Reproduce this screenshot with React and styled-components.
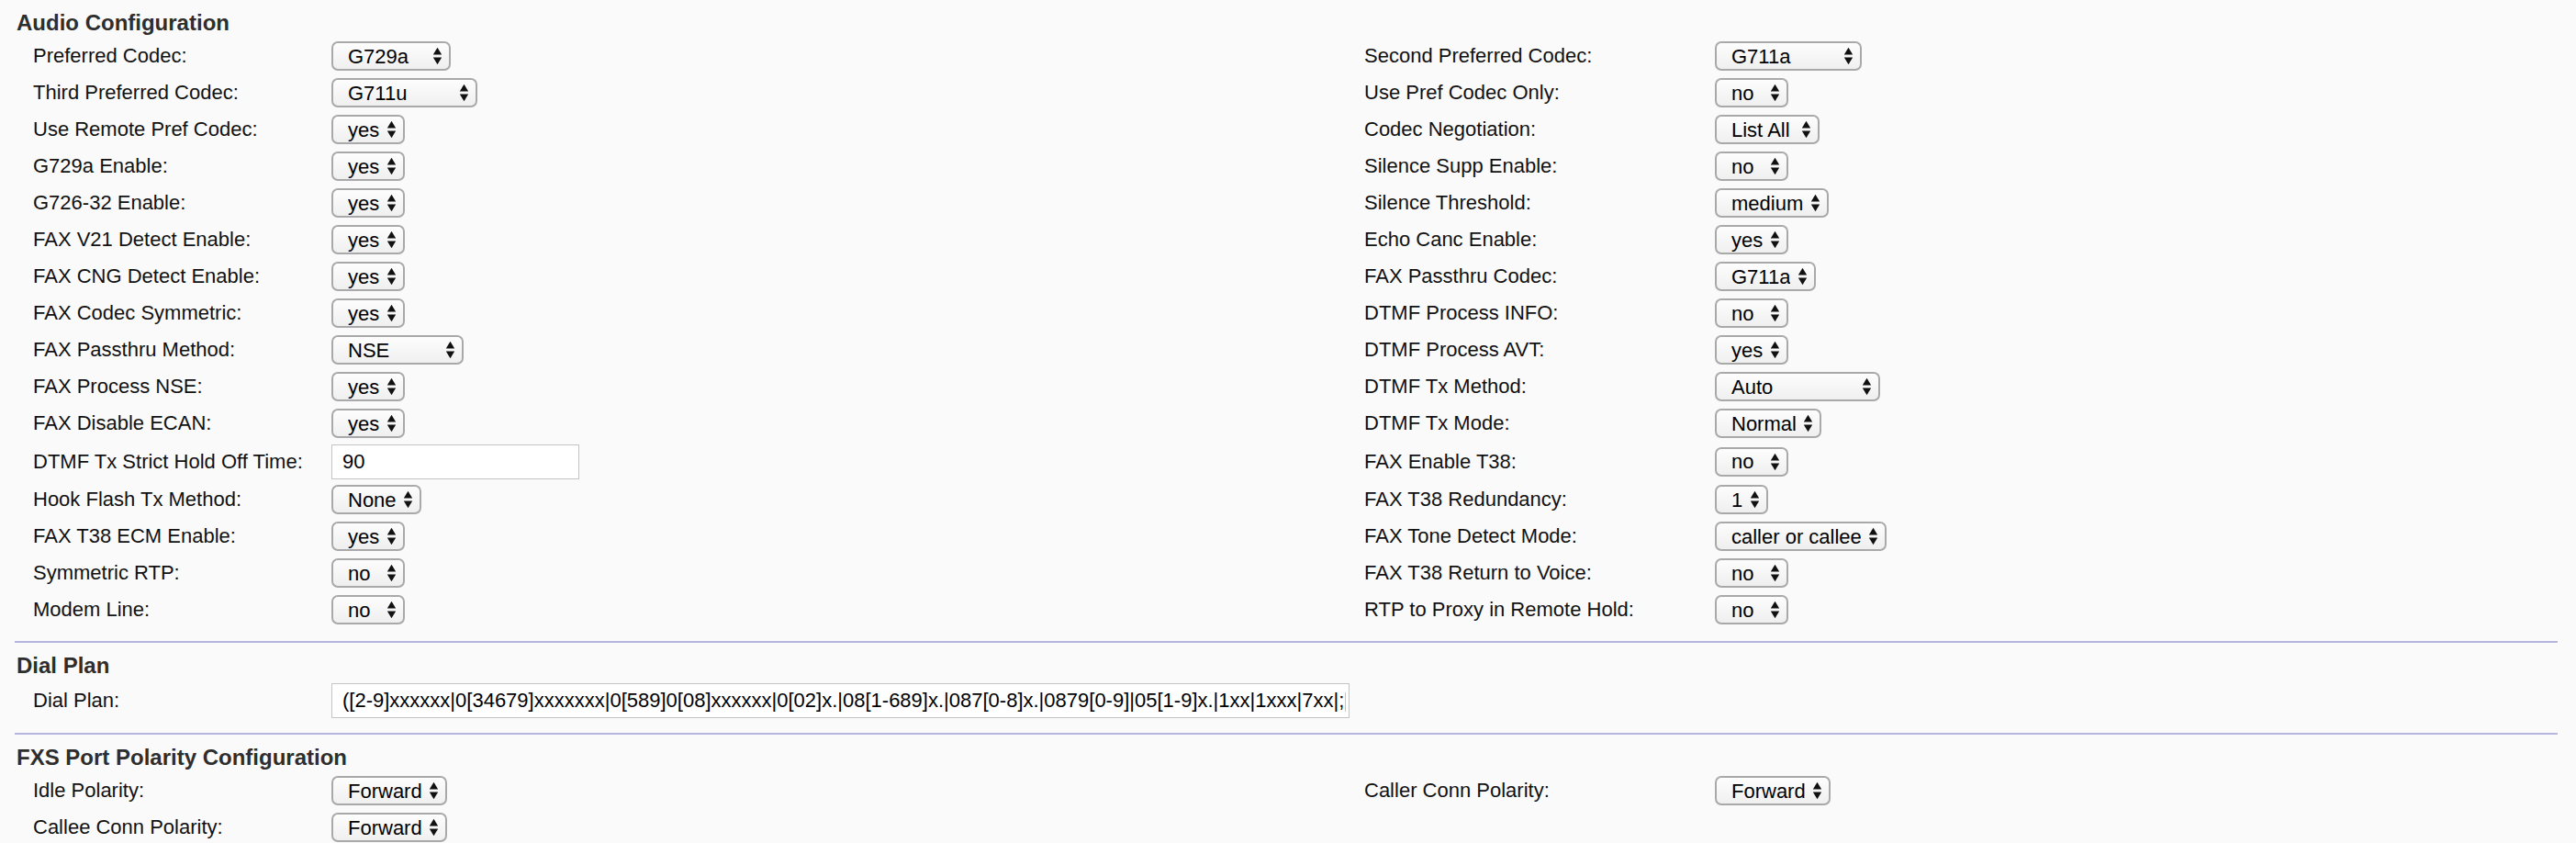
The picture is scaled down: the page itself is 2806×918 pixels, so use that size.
import React from 'react';
import styled, { createGlobalStyle } from 'styled-components';

const GlobalStyle = createGlobalStyle`
  html, body {
    margin: 0;
    padding: 0;
    background: #fafafa;
  }
  body {
    font-family: 'Liberation Sans', Arial, Helvetica, sans-serif;
    color: #000;
  }
`;

const Page = styled.div`
  margin: 0 20px 0 16px;
`;

const Section = styled.section`
  border-top: ${({ $first }) => ($first ? 'none' : '2px solid #b5b5de')};
  padding: 11px 0 14px;
`;

const Heading = styled.h2`
  margin: 0 0 2px 2px;
  font-size: 24px;
  line-height: 28px;
  font-weight: bold;
  color: #2e2e2e;
`;

const FieldGrid = styled.div`
  display: grid;
  grid-template-columns: 325px 1125px 382px 1fr;
  align-items: center;
  padding-left: 20px;
`;

const Label = styled.div`
  font-size: 22px;
  line-height: 26px;
  min-height: 40px;
  display: flex;
  align-items: center;
  white-space: nowrap;
  color: #111;
`;

const Cell = styled.div`
  min-height: 40px;
  display: flex;
  align-items: center;
`;

const SelectBox = styled.div`
  position: relative;
  display: inline-block;
  width: ${({ $w }) => $w}px;
  height: 32px;
`;

const NativeSelect = styled.select`
  appearance: none;
  -webkit-appearance: none;
  box-sizing: border-box;
  width: 100%;
  height: 100%;
  margin: 0;
  padding: 0 26px 0 16px;
  border: 2px solid #a9a9a9;
  border-radius: 7px;
  background: linear-gradient(#fdfdfd, #efefef);
  font-family: 'Liberation Sans', Arial, sans-serif;
  font-size: 22px;
  color: #000;
  outline: none;
`;

const Arrows = styled.svg`
  position: absolute;
  right: 9px;
  top: 50%;
  transform: translateY(-50%);
  pointer-events: none;
`;

const TextInput = styled.input`
  box-sizing: border-box;
  width: ${({ $w }) => $w}px;
  height: 38px;
  margin: 2.5px 0;
  padding: 0 ${({ $tight }) => ($tight ? '3px' : '11px')} 0 11px;
  border: 1px solid #c4c4c4;
  border-radius: 0;
  background: #fff;
  font-family: 'Liberation Sans', Arial, sans-serif;
  font-size: 22px;
  color: #000;
  outline: none;
`;

const Select = ({ value, width, options }) => (
  <SelectBox $w={width}>
    <NativeSelect defaultValue={value}>
      {(options || [value]).map((o) => (
        <option key={o} value={o}>
          {o}
        </option>
      ))}
    </NativeSelect>
    <Arrows width="11" height="19" viewBox="0 0 11 19">
      <polygon points="0.8,8 5.5,0.3 10.2,8" fill="#111" />
      <polygon points="0.8,11 10.2,11 5.5,18.7" fill="#111" />
    </Arrows>
  </SelectBox>
);

const yn = ['yes', 'no'];
const codecs = ['G711u', 'G711a', 'G726-32', 'G729a'];

const sel = (value, width, options) => ({ kind: 'select', value, width, options });
const txt = (value, width, tight) => ({ kind: 'text', value, width, tight });

const audioRows = [
  [['Preferred Codec:', sel('G729a', 130, codecs)], ['Second Preferred Codec:', sel('G711a', 160, ['Unspecified', ...codecs])]],
  [['Third Preferred Codec:', sel('G711u', 159, ['Unspecified', ...codecs])], ['Use Pref Codec Only:', sel('no', 80, yn)]],
  [['Use Remote Pref Codec:', sel('yes', 80, yn)], ['Codec Negotiation:', sel('List All', 114, ['Default', 'List All'])]],
  [['G729a Enable:', sel('yes', 80, yn)], ['Silence Supp Enable:', sel('no', 80, yn)]],
  [['G726-32 Enable:', sel('yes', 80, yn)], ['Silence Threshold:', sel('medium', 124, ['high', 'medium', 'low'])]],
  [['FAX V21 Detect Enable:', sel('yes', 80, yn)], ['Echo Canc Enable:', sel('yes', 80, yn)]],
  [['FAX CNG Detect Enable:', sel('yes', 80, yn)], ['FAX Passthru Codec:', sel('G711a', 110, ['G711u', 'G711a'])]],
  [['FAX Codec Symmetric:', sel('yes', 80, yn)], ['DTMF Process INFO:', sel('no', 80, yn)]],
  [['FAX Passthru Method:', sel('NSE', 144, ['None', 'NSE', 'ReINVITE'])], ['DTMF Process AVT:', sel('yes', 80, yn)]],
  [['FAX Process NSE:', sel('yes', 80, yn)], ['DTMF Tx Method:', sel('Auto', 180, ['InBand', 'AVT', 'INFO', 'Auto'])]],
  [['FAX Disable ECAN:', sel('yes', 80, yn)], ['DTMF Tx Mode:', sel('Normal', 116, ['Strict', 'Normal'])]],
  [['DTMF Tx Strict Hold Off Time:', txt('90', 270)], ['FAX Enable T38:', sel('no', 80, yn)]],
  [['Hook Flash Tx Method:', sel('None', 98, ['None', 'AVT', 'INFO'])], ['FAX T38 Redundancy:', sel('1', 58, ['0', '1', '2', '3'])]],
  [['FAX T38 ECM Enable:', sel('yes', 80, yn)], ['FAX Tone Detect Mode:', sel('caller or callee', 187, ['caller or callee', 'caller only', 'callee only'])]],
  [['Symmetric RTP:', sel('no', 80, yn)], ['FAX T38 Return to Voice:', sel('no', 80, yn)]],
  [['Modem Line:', sel('no', 80, yn)], ['RTP to Proxy in Remote Hold:', sel('no', 80, yn)]],
];

const dialPlan =
  '([2-9]xxxxxx|0[34679]xxxxxxx|0[589]0[08]xxxxxx|0[02]x.|08[1-689]x.|087[0-8]x.|0879[0-9]|05[1-9]x.|1xx|1xxx|7xx|;[*#]xx.|00x.)';

const dialRows = [[['Dial Plan:', txt(dialPlan, 1109, true)]]];

const polarity = ['Forward', 'Reverse'];
const polarityRows = [
  [['Idle Polarity:', sel('Forward', 126, polarity)], ['Caller Conn Polarity:', sel('Forward', 126, polarity)]],
  [['Callee Conn Polarity:', sel('Forward', 126, polarity)]],
];

const Control = ({ field }) =>
  field.kind === 'text' ? (
    <TextInput type="text" $w={field.width} $tight={field.tight} defaultValue={field.value} />
  ) : (
    <Select value={field.value} width={field.width} options={field.options} />
  );

const Fields = ({ rows }) => (
  <FieldGrid>
    {rows.map((row, r) =>
      [0, 1].map((c) => {
        const pair = row[c];
        if (!pair) {
          return (
            <React.Fragment key={`${r}-${c}`}>
              <Label />
              <Cell />
            </React.Fragment>
          );
        }
        return (
          <React.Fragment key={`${r}-${c}`}>
            <Label>{pair[0]}</Label>
            <Cell>
              <Control field={pair[1]} />
            </Cell>
          </React.Fragment>
        );
      })
    )}
  </FieldGrid>
);

const App = () => (
  <>
    <GlobalStyle />
    <Page>
      <Section $first>
        <Heading>Audio Configuration</Heading>
        <Fields rows={audioRows} />
      </Section>
      <Section>
        <Heading>Dial Plan</Heading>
        <Fields rows={dialRows} />
      </Section>
      <Section>
        <Heading>FXS Port Polarity Configuration</Heading>
        <Fields rows={polarityRows} />
      </Section>
    </Page>
  </>
);

export default App;
